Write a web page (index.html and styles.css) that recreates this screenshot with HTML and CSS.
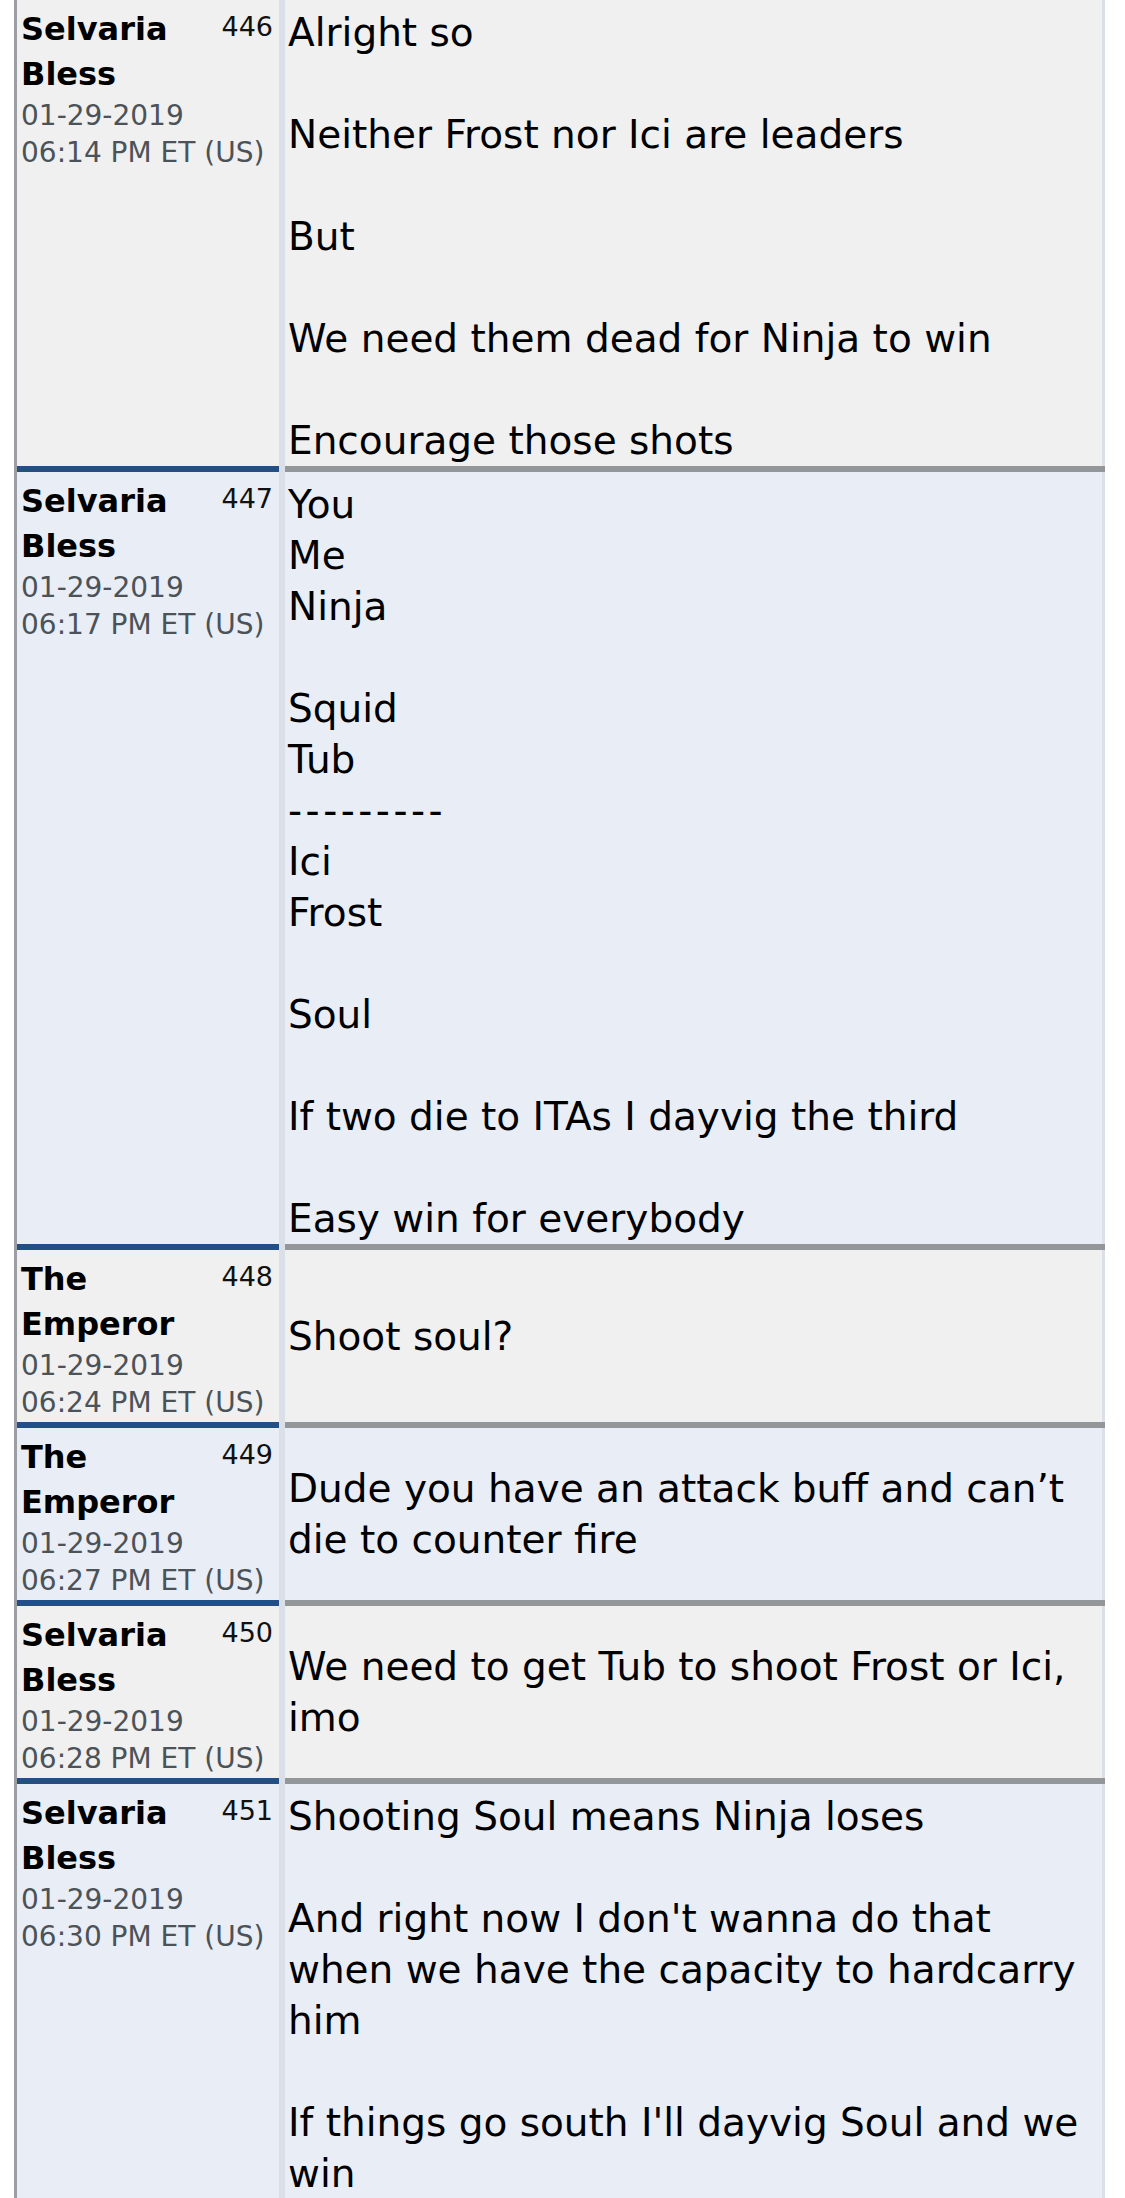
FILE: index.html
```html
<!DOCTYPE html>
<html lang="en">
<head>
<meta charset="utf-8">
<title>Thread</title>
<link rel="stylesheet" href="styles.css">
</head>
<body>
<div class="thread">
  <div class="post alt1">
    <div class="info">
      <div class="head"><span class="name">Selvaria Bless</span><span class="num">446</span></div>
      <div class="date">01-29-2019<br>06:14 PM ET (US)</div>
    </div>
    <div class="sep"></div>
    <div class="msg">Alright so<br><br>Neither Frost nor Ici are leaders<br><br>But<br><br>We need them dead for Ninja to win<br><br>Encourage those shots</div>
  </div>
  <div class="post alt2">
    <div class="info">
      <div class="head"><span class="name">Selvaria Bless</span><span class="num">447</span></div>
      <div class="date">01-29-2019<br>06:17 PM ET (US)</div>
    </div>
    <div class="sep"></div>
    <div class="msg">You<br>Me<br>Ninja<br><br>Squid<br>Tub<br><span class="dashes">---------</span><br>Ici<br>Frost<br><br>Soul<br><br>If two die to ITAs I dayvig the third<br><br>Easy win for everybody</div>
  </div>
  <div class="post alt1">
    <div class="info">
      <div class="head"><span class="name">The Emperor</span><span class="num">448</span></div>
      <div class="date">01-29-2019<br>06:24 PM ET (US)</div>
    </div>
    <div class="sep"></div>
    <div class="msg center">Shoot soul?</div>
  </div>
  <div class="post alt2">
    <div class="info">
      <div class="head"><span class="name">The Emperor</span><span class="num">449</span></div>
      <div class="date">01-29-2019<br>06:27 PM ET (US)</div>
    </div>
    <div class="sep"></div>
    <div class="msg center">Dude you have an attack buff and can’t die to counter fire</div>
  </div>
  <div class="post alt1">
    <div class="info">
      <div class="head"><span class="name">Selvaria Bless</span><span class="num">450</span></div>
      <div class="date">01-29-2019<br>06:28 PM ET (US)</div>
    </div>
    <div class="sep"></div>
    <div class="msg center">We need to get Tub to shoot Frost or Ici, imo</div>
  </div>
  <div class="post alt2">
    <div class="info">
      <div class="head"><span class="name">Selvaria Bless</span><span class="num">451</span></div>
      <div class="date">01-29-2019<br>06:30 PM ET (US)</div>
    </div>
    <div class="sep"></div>
    <div class="msg">Shooting Soul means Ninja loses<br><br>And right now I don't wanna do that when we have the capacity to hardcarry him<br><br>If things go south I'll dayvig Soul and we win</div>
  </div>
</div>
</body>
</html>
```

FILE: styles.css
```css
html, body {
  margin: 0;
  padding: 0;
  background: #ffffff;
}

body {
  font-family: Verdana, "DejaVu Sans", sans-serif;
  color: #000000;
}

.thread {
  margin-left: 14px;
  width: 1088px;
  border-left: 3px solid #9b9fa3;
}

.post {
  display: flex;
  align-items: stretch;
}

.alt1 .info,
.alt1 .msg {
  background: #f0f0f0;
}

.alt2 .info,
.alt2 .msg {
  background: #e9edf5;
}

.info {
  width: 262px;
  flex: none;
  box-sizing: border-box;
  padding: 7px 6px 1px 4px;
  border-bottom: 6px solid #234f87;
}

.head {
  display: flex;
  align-items: flex-start;
  justify-content: space-between;
}

.name {
  font-weight: bold;
  font-size: 32px;
  line-height: 45px;
  width: 190px;
}

.num {
  font-size: 27px;
  line-height: 30px;
  margin-top: 5px;
  color: #111111;
}

.date {
  font-size: 28px;
  line-height: 37px;
  color: #4b5258;
}

.sep {
  width: 6px;
  flex: none;
  background: #dbe0e8;
}

.msg {
  flex: 1;
  box-sizing: border-box;
  padding: 7px 6px 0 3px;
  font-size: 39px;
  line-height: 51px;
  border-bottom: 6px solid #939799;
  box-shadow: inset -3px 0 0 #dbe0e8;
}

.msg.center {
  display: flex;
  flex-direction: column;
  justify-content: center;
  padding-bottom: 7px;
}

.dashes {
  letter-spacing: 3.5px;
}
```
